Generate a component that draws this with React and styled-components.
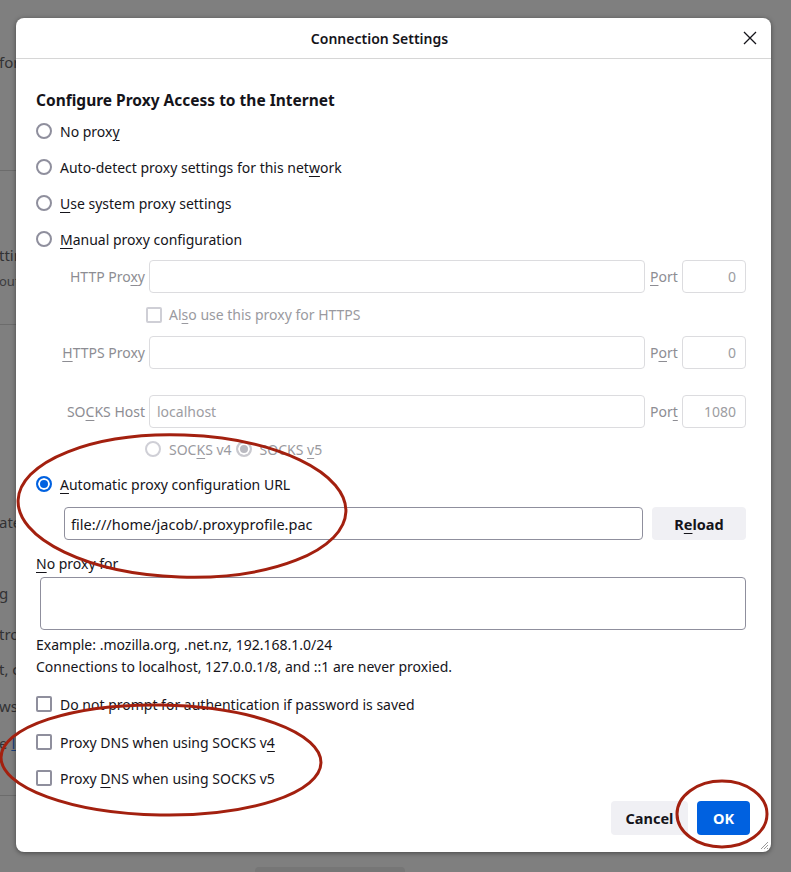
import styled, { createGlobalStyle } from 'styled-components';

const GlobalStyle = createGlobalStyle`
  html, body {
    margin: 0;
    padding: 0;
    background: #7f7f7f;
  }
  body {
    font-family: "Noto Sans", "Open Sans", sans-serif;
  }
  * { box-sizing: border-box; }
`;

const Screen = styled.div`
  position: relative;
  width: 791px;
  height: 872px;
  overflow: hidden;
  background: #7f7f7f;
`;

/* page behind the modal, dimmed */
const Backdrop = styled.div`
  display: flex;
  flex-direction: column;
  color: #323234;
  font-size: 15px;
`;

const BackLine = styled.div`
  margin-top: ${p => p.$top}px;
  height: 20px;
  line-height: 20px;
  white-space: nowrap;
  font-size: ${p => p.$small ? '13px' : '15px'};
  color: ${p => p.$small ? '#3c3c3e' : '#323234'};
  margin-left: -1px;
`;

const BackLink = styled.span`
  color: #1c3f7c;
  text-decoration: underline;
`;

const BackRule = styled.div`
  margin-top: ${p => p.$top}px;
  height: 1px;
  width: 40px;
  background: #6c6c6c;
`;

const BackButton = styled.div`
  margin-top: ${p => p.$top}px;
  margin-left: 255px;
  width: 150px;
  height: 20px;
  border-radius: 4px;
  background: #767676;
`;

const Dialog = styled.div`
  position: absolute;
  left: 16px;
  top: 18px;
  width: 755px;
  height: 834px;
  background: #fff;
  border-radius: 8px;
  box-shadow: 0 1px 5px rgba(0, 0, 0, 0.45);
  display: flex;
  flex-direction: column;
  color: #15141a;
  font-size: 14px;
`;

const Header = styled.div`
  position: relative;
  flex-shrink: 0;
  height: 41px;
  padding-right: 28px;
  border-bottom: 1px solid #d6d6d6;
  display: flex;
  align-items: center;
  justify-content: center;
`;

const Title = styled.h1`
  margin: 0;
  font-size: 14px;
  font-weight: 600;
`;

const CloseButton = styled.button`
  position: absolute;
  right: 13px;
  top: 12px;
  width: 16px;
  height: 16px;
  padding: 0;
  border: 0;
  background: none;
  display: flex;
`;

const Body = styled.div`
  flex: 1;
  display: flex;
  flex-direction: column;
  padding: 28px 25px 0 20px;
`;

const Heading = styled.h2`
  margin: 0;
  height: 26px;
  line-height: 26px;
  font-size: 15.5px;
  font-weight: 700;
`;

const OptionRow = styled.label`
  display: flex;
  align-items: center;
  gap: ${p => p.$gap || 8}px;
  height: ${p => p.$h || 36}px;
  margin-top: ${p => p.$top || 0}px;
  margin-left: ${p => p.$indent || 0}px;
  color: ${p => p.$disabled ? '#9a9aa0' : '#15141a'};
  white-space: nowrap;
`;

const OptionText = styled.span`
  white-space: nowrap;
`;

const Radio = styled.span`
  flex-shrink: 0;
  width: 16px;
  height: 16px;
  border-radius: 50%;
  border: 2px solid ${p => p.$checked ? (p.$disabled ? '#c9c9cf' : '#0061e0') : (p.$disabled ? '#cfcfd6' : '#8f8f9d')};
  background: ${p => p.$checked ? (p.$disabled ? '#b9b9c0' : '#0061e0') : '#fff'};
  box-shadow: ${p => p.$checked ? 'inset 0 0 0 2px #fff' : 'none'};
`;

const Checkbox = styled.span`
  flex-shrink: 0;
  width: 16px;
  height: 16px;
  border-radius: 2px;
  border: 2px solid ${p => p.$disabled ? '#cfcfd6' : '#8f8f9d'};
  background: #fff;
  margin-left: ${p => p.$shift || 0}px;
`;

const Key = styled.u`
  text-decoration-thickness: 1px;
  text-underline-offset: 3px;
`;

const ManualGrid = styled.div`
  display: grid;
  margin-top: 3px;
  margin-left: 20px;
  grid-template-columns: 93px 496px 37px 64px;
  grid-template-rows: 33px 43px 33px 26px 33px 42px;
  align-items: center;
`;

const FieldLabel = styled.span`
  text-align: right;
  padding-right: 4px;
  color: #8d8d93;
  white-space: nowrap;
`;

const PortLabel = styled.span`
  padding-left: 5px;
  color: #8d8d93;
`;

const TextField = styled.div`
  height: 33px;
  border: 1px solid ${p => p.$disabled ? '#dcdcdf' : '#8f8f9d'};
  border-radius: 4px;
  padding: 0 ${p => p.$right ? 9 : 7}px;
  display: flex;
  align-items: center;
  justify-content: ${p => p.$right ? 'flex-end' : 'flex-start'};
  color: ${p => p.$disabled ? '#9d9da2' : '#15141a'};
  font-size: 14px;
  white-space: nowrap;
  overflow: hidden;
`;

const SpanCols = styled.div`
  grid-column: 2 / 5;
  display: flex;
  align-items: center;
  height: 100%;
`;

const UrlRow = styled.div`
  display: flex;
  gap: 9px;
  margin-top: 9px;
  margin-left: 28px;
`;

const UrlField = styled(TextField)`
  flex: 1;
  padding-left: 6px;
  font-size: 14.5px;
`;

const Button = styled.button`
  height: ${p => p.$h || 33}px;
  width: ${p => p.$w}px;
  border: 0;
  border-radius: 4px;
  padding: 0;
  font-family: inherit;
  font-size: 14.5px;
  font-weight: 700;
  background: ${p => p.$primary ? '#0061e0' : '#f0f0f4'};
  color: ${p => p.$primary ? '#fff' : '#15141a'};
`;

const Caption = styled.div`
  margin-top: 14px;
  height: 20px;
  line-height: 20px;
`;

const TextArea = styled.div`
  margin-top: 3px;
  margin-left: 4px;
  height: 53px;
  border: 1px solid #8f8f9d;
  border-radius: 4px;
`;

const Notes = styled.div`
  margin-top: 4px;
  line-height: 22px;
`;

const CheckList = styled.div`
  display: flex;
  flex-direction: column;
  margin-top: 8px;
`;

const Footer = styled.div`
  margin-top: auto;
  display: flex;
  justify-content: flex-end;
  gap: 9px;
  padding: 0 21px 17px 0;
`;

const Grip = styled.svg`
  position: absolute;
  right: 2px;
  bottom: 2px;
`;

const Annotations = styled.svg`
  position: absolute;
  left: 0;
  top: 0;
  pointer-events: none;
`;

export default function App() {
  return (
    <Screen>
      <GlobalStyle />
      <Backdrop>
        <BackLine $top={52}>for</BackLine>
        <BackRule $top={98} />
        <BackLine $top={74}>ttings</BackLine>
        <BackLine $top={6} $small>out</BackLine>
        <BackRule $top={33} />
        <BackLine $top={187}>ate</BackLine>
        <BackLine $top={51}>g</BackLine>
        <BackLine $top={21}>tro</BackLine>
        <BackLine $top={15}>t, c</BackLine>
        <BackLine $top={17}>wsd</BackLine>
        <BackLine $top={17}>e <BackLink>le</BackLink></BackLine>
        <BackRule $top={42} />
        <BackButton $top={71} />
      </Backdrop>

      <Dialog>
        <Header>
          <Title>Connection Settings</Title>
          <CloseButton aria-label="Close">
            <svg width="16" height="16" viewBox="0 0 16 16">
              <path d="M2 2 L14 14 M14 2 L2 14" stroke="#15141a" strokeWidth="1.3" fill="none" />
            </svg>
          </CloseButton>
        </Header>

        <Body>
          <Heading>Configure Proxy Access to the Internet</Heading>
          <OptionRow><Radio /><OptionText>No prox<Key>y</Key></OptionText></OptionRow>
          <OptionRow><Radio /><OptionText>Auto-detect proxy settings for this net<Key>w</Key>ork</OptionText></OptionRow>
          <OptionRow><Radio /><OptionText><Key>U</Key>se system proxy settings</OptionText></OptionRow>
          <OptionRow><Radio /><OptionText><Key>M</Key>anual proxy configuration</OptionText></OptionRow>

          <ManualGrid>
            <FieldLabel>HTTP Pro<Key>x</Key>y</FieldLabel>
            <TextField $disabled />
            <PortLabel><Key>P</Key>ort</PortLabel>
            <TextField $disabled $right>0</TextField>

            <SpanCols>
              <OptionRow $disabled $gap={7} $h={43}>
                <Checkbox $disabled $shift={-3} />
                <OptionText>Al<Key>s</Key>o use this proxy for HTTPS</OptionText>
              </OptionRow>
            </SpanCols>

            <FieldLabel><Key>H</Key>TTPS Proxy</FieldLabel>
            <TextField $disabled />
            <PortLabel>P<Key>o</Key>rt</PortLabel>
            <TextField $disabled $right>0</TextField>

            <SpanCols />

            <FieldLabel>SO<Key>C</Key>KS Host</FieldLabel>
            <TextField $disabled>localhost</TextField>
            <PortLabel>Por<Key>t</Key></PortLabel>
            <TextField $disabled $right>1080</TextField>

            <SpanCols>
              <OptionRow $disabled $h={42} $indent={-4}>
                <Radio $disabled /><OptionText>SOC<Key>K</Key>S v4</OptionText>
              </OptionRow>
              <OptionRow $disabled $h={42} $indent={4}>
                <Radio $disabled $checked /><OptionText>SOCKS <Key>v</Key>5</OptionText>
              </OptionRow>
            </SpanCols>
          </ManualGrid>

          <OptionRow $h={28}>
            <Radio $checked /><OptionText><Key>A</Key>utomatic proxy configuration URL</OptionText>
          </OptionRow>
          <UrlRow>
            <UrlField>file:///home/jacob/.proxyprofile.pac</UrlField>
            <Button $w={94}>R<Key>e</Key>load</Button>
          </UrlRow>

          <Caption><Key>N</Key>o proxy for</Caption>
          <TextArea />
          <Notes>
            Example: .mozilla.org, .net.nz, 192.168.1.0/24<br />
            Connections to localhost, 127.0.0.1/8, and ::1 are never proxied.
          </Notes>

          <CheckList>
            <OptionRow><Checkbox /><OptionText>Do not prompt for authentication if password is saved</OptionText></OptionRow>
            <OptionRow $top={2}><Checkbox /><OptionText>Proxy DNS when using SOCKS v<Key>4</Key></OptionText></OptionRow>
            <OptionRow><Checkbox /><OptionText>Proxy <Key>D</Key>NS when using SOCKS v5</OptionText></OptionRow>
          </CheckList>
        </Body>

        <Footer>
          <Button $w={77} $h={34}>Cancel</Button>
          <Button $w={53} $h={34} $primary>OK</Button>
        </Footer>

        <Grip width="10" height="10" viewBox="0 0 10 10">
          <path d="M9 2 L2 9 M9 5 L5 9 M9 8 L8 9" stroke="#9a9a9a" strokeWidth="1" />
        </Grip>
      </Dialog>

      <Annotations width="791" height="872" viewBox="0 0 791 872">
        <g fill="none" stroke="#a3200f" strokeWidth="3">
          <ellipse cx="182" cy="506" rx="164" ry="71" transform="rotate(2 182 506)" />
          <ellipse cx="161" cy="760" rx="160" ry="55" transform="rotate(1 161 760)" />
          <ellipse cx="722" cy="814" rx="45" ry="33" />
        </g>
      </Annotations>
    </Screen>
  );
}
